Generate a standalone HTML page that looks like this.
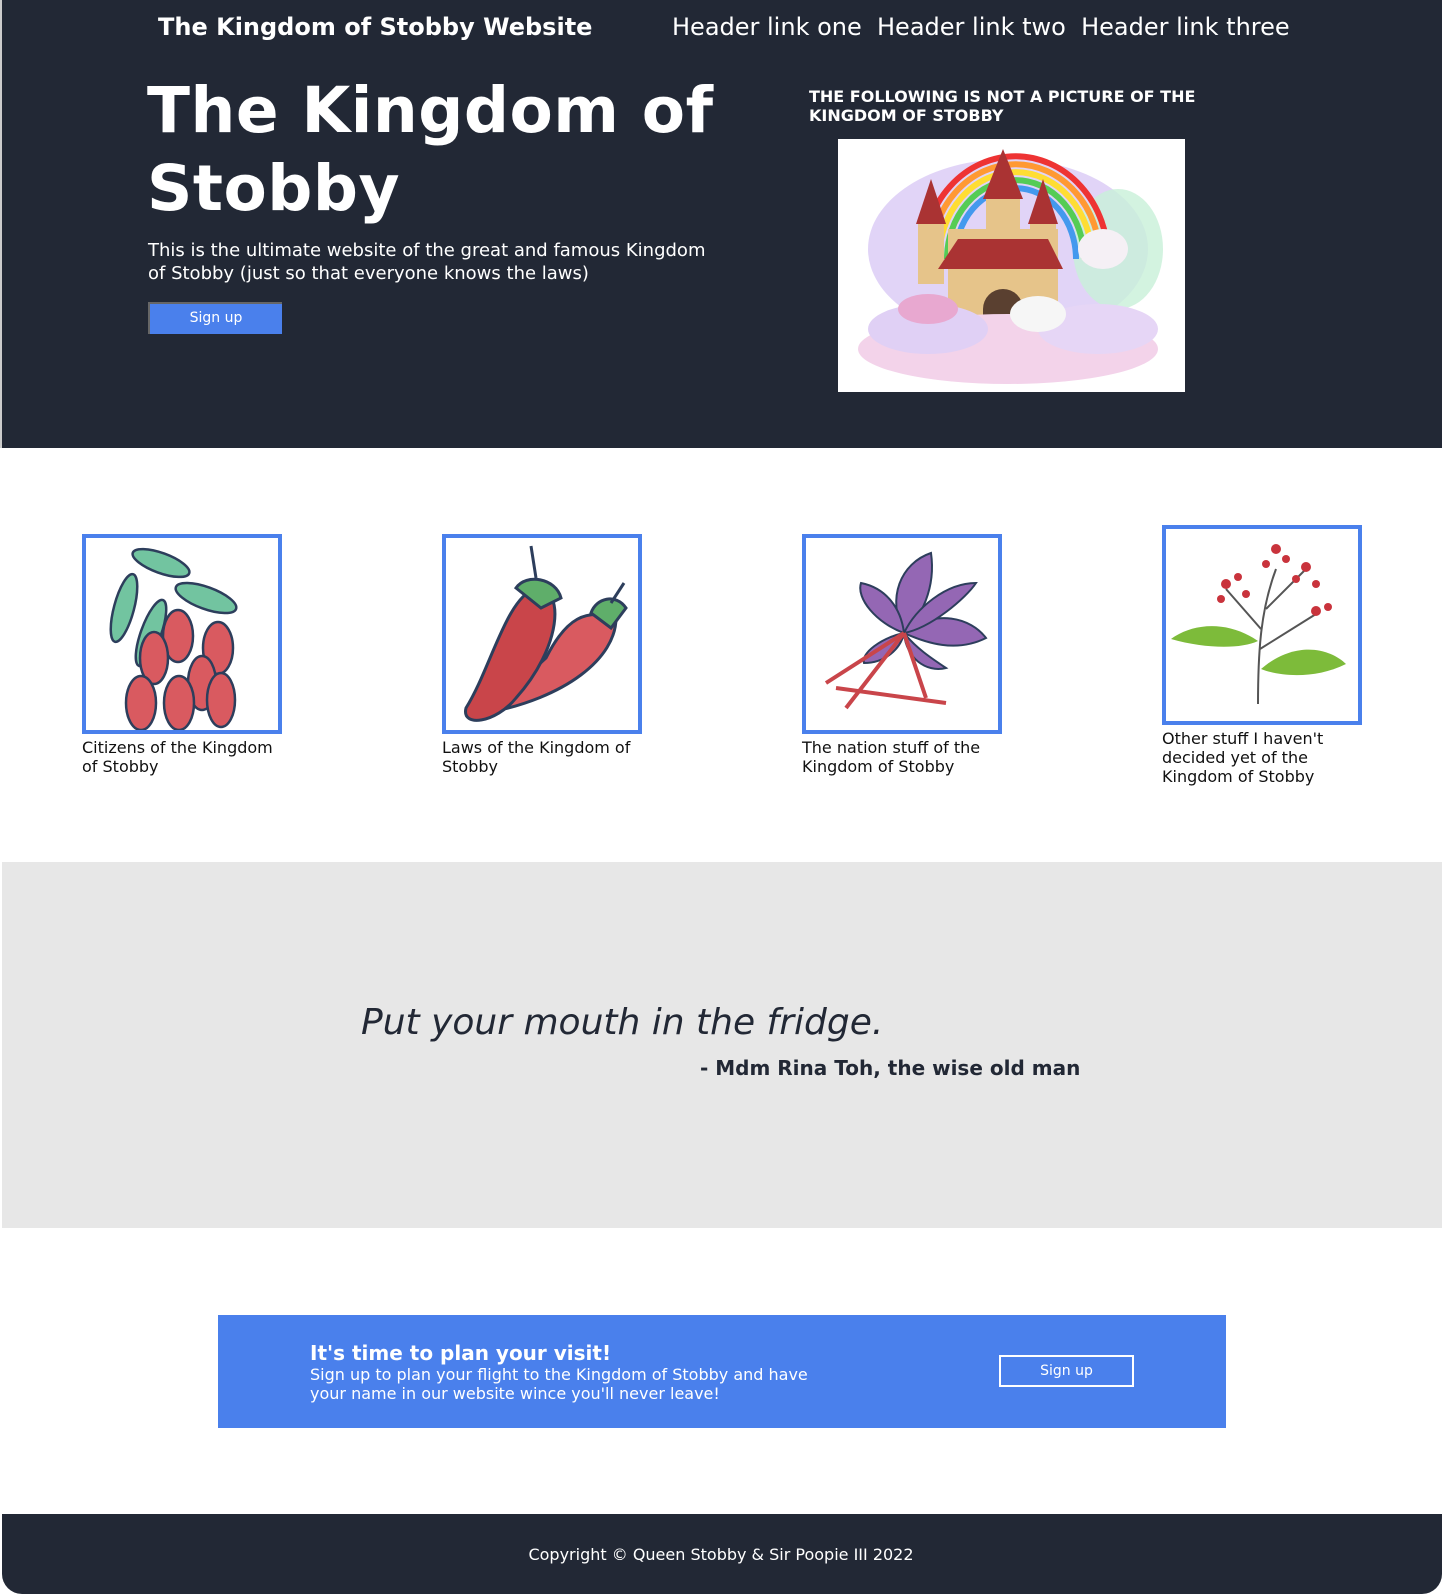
<!DOCTYPE html>
<html><head><meta charset="utf-8"><style>
*{margin:0;padding:0;box-sizing:border-box}
body{width:1442px;height:1594px;font-family:"DejaVu Sans","Liberation Sans",sans-serif;background:#fff;position:relative;overflow:hidden}
.hdr{position:absolute;left:0;top:0;width:1442px;height:448px;background:#222835;border-left:2px solid #ccc}
.abs{position:absolute}
.white{color:#fff}
.card{position:absolute;width:200px;height:200px;border:4px solid #4a80ec;background:#fff}
.cap{position:absolute;font-size:16px;line-height:19px;color:#111;width:210px}
</style></head><body>
<div class="hdr">
  <div class="abs white" style="left:156px;top:13px;font-size:24px;font-weight:bold">The Kingdom of Stobby Website</div>
  <div class="abs white" style="left:670px;top:13px;font-size:24px">Header link one&nbsp; Header link two&nbsp; Header link three</div>
  <div class="abs white" style="left:145px;top:72px;font-size:63px;font-weight:bold;line-height:78px;letter-spacing:0.5px">The Kingdom of<br>Stobby</div>
  <div class="abs white" style="left:146px;top:239px;font-size:18px;line-height:23px;width:580px">This is the ultimate website of the great and famous Kingdom of Stobby (just so that everyone knows the laws)</div>
  <div class="abs white" style="left:146px;top:302px;width:134px;height:32px;background:#4a80ec;border-top:2px solid #666;border-left:2px solid #666;font-size:14px;text-align:center;line-height:29px">Sign up</div>
  <div class="abs white" style="left:807px;top:87px;font-size:16px;font-weight:bold;line-height:19px;width:420px">THE FOLLOWING IS NOT A PICTURE OF THE KINGDOM OF STOBBY</div>
  <svg class="abs" style="left:836px;top:139px" width="347" height="253" viewBox="0 0 347 253">
    <rect width="347" height="253" fill="#fff"/>
    <ellipse cx="170" cy="110" rx="140" ry="90" fill="#d9c9f5" opacity=".8"/>
    <ellipse cx="280" cy="110" rx="45" ry="60" fill="#c8f0d8" opacity=".8"/>
    <path d="M85 120 A90 100 0 0 1 270 120" fill="none" stroke="#e33" stroke-width="6"/>
    <path d="M93 120 A82 92 0 0 1 262 120" fill="none" stroke="#f93" stroke-width="6"/>
    <path d="M101 120 A74 84 0 0 1 254 120" fill="none" stroke="#fd3" stroke-width="6"/>
    <path d="M109 120 A66 76 0 0 1 246 120" fill="none" stroke="#5c5" stroke-width="6"/>
    <path d="M117 120 A58 68 0 0 1 238 120" fill="none" stroke="#49e" stroke-width="6"/>
    <rect x="110" y="90" width="110" height="110" fill="#e6c48a"/>
    <polygon points="145,60 165,10 185,60" fill="#a33"/>
    <rect x="148" y="60" width="34" height="60" fill="#e6c48a"/>
    <polygon points="78,85 93,40 108,85" fill="#a33"/><rect x="80" y="85" width="26" height="60" fill="#e6c48a"/>
    <polygon points="190,85 205,40 220,85" fill="#a33"/><rect x="192" y="85" width="26" height="60" fill="#e6c48a"/>
    <polygon points="100,130 120,100 210,100 225,130" fill="#a33"/>
    <path d="M145 200 v-30 a20 20 0 0 1 40 0 v30z" fill="#5a4030"/>
    <ellipse cx="170" cy="210" rx="150" ry="35" fill="#f3d3ea"/>
    <ellipse cx="90" cy="190" rx="60" ry="25" fill="#e0d0f5"/>
    <ellipse cx="260" cy="190" rx="60" ry="25" fill="#e6d6f6"/>
    <ellipse cx="90" cy="170" rx="30" ry="15" fill="#e8a8d0"/>
    <ellipse cx="200" cy="175" rx="28" ry="18" fill="#f6f6f6"/>
    <ellipse cx="265" cy="110" rx="25" ry="20" fill="#f5f0f5"/>
  </svg>
</div>

<div class="card" style="left:82px;top:534px">
  <svg width="192" height="192" viewBox="0 0 192 192">
    <g stroke="#2d3e5c" stroke-width="2.5">
      <ellipse cx="75" cy="25" rx="30" ry="10" fill="#72c4a0" transform="rotate(20 75 25)"/>
      <ellipse cx="38" cy="70" rx="10" ry="35" fill="#72c4a0" transform="rotate(15 38 70)"/>
      <ellipse cx="65" cy="95" rx="10" ry="35" fill="#72c4a0" transform="rotate(20 65 95)"/>
      <ellipse cx="120" cy="60" rx="32" ry="11" fill="#72c4a0" transform="rotate(20 120 60)"/>
      <g fill="#d95a60">
        <ellipse cx="92" cy="98" rx="15" ry="26"/><ellipse cx="132" cy="110" rx="15" ry="26"/>
        <ellipse cx="68" cy="120" rx="14" ry="26"/><ellipse cx="116" cy="145" rx="14" ry="27"/>
        <ellipse cx="55" cy="165" rx="15" ry="27"/><ellipse cx="93" cy="165" rx="15" ry="27"/>
        <ellipse cx="135" cy="162" rx="14" ry="27"/>
      </g>
    </g>
  </svg>
</div>
<div class="cap" style="left:82px;top:738px">Citizens of the Kingdom of Stobby</div>

<div class="card" style="left:442px;top:534px">
  <svg width="192" height="192" viewBox="0 0 192 192">
    <g stroke="#2d3e5c" stroke-width="3">
      <path d="M100 120 C120 80 140 70 170 80 C170 120 120 160 40 175 Z" fill="#d95a60"/>
      <path d="M90 50 C120 50 115 110 70 160 C50 185 15 190 20 170 C45 130 60 60 90 50Z" fill="#c9454a"/>
      <path d="M70 50 C80 35 110 40 115 60 L95 70Z" fill="#5fae6a"/>
      <path d="M145 75 C150 60 170 55 180 70 L165 90Z" fill="#5fae6a"/>
      <path d="M90 40 L85 8" fill="none"/><path d="M165 65 L178 45" fill="none"/>
    </g>
  </svg>
</div>
<div class="cap" style="left:442px;top:738px">Laws of the Kingdom of Stobby</div>

<div class="card" style="left:802px;top:534px">
  <svg width="192" height="192" viewBox="0 0 192 192">
    <g stroke="#2d3e5c" stroke-width="2" fill="#9467b4">
      <path d="M98 95 C80 60 95 25 125 15 C130 50 115 80 98 95Z"/>
      <path d="M98 95 C70 85 50 60 55 45 C80 50 95 70 98 95Z"/>
      <path d="M98 95 C130 70 165 80 180 100 C150 115 120 105 98 95Z"/>
      <path d="M98 95 C125 90 160 60 170 45 C140 45 110 70 98 95Z"/>
      <path d="M98 95 C75 100 55 115 58 125 C80 125 95 110 98 95Z"/>
      <path d="M98 95 C110 110 125 120 140 130 C120 135 100 120 98 95Z"/>
      <path d="M98 95 L20 145 M98 95 L40 170 M98 95 L120 160 M30 150 L140 165" fill="none" stroke="#c9454a" stroke-width="4"/>
    </g>
  </svg>
</div>
<div class="cap" style="left:802px;top:738px">The nation stuff of the Kingdom of Stobby</div>

<div class="card" style="left:1162px;top:525px">
  <svg width="192" height="192" viewBox="0 0 192 192">
    <path d="M92 175 C92 120 95 80 110 40 M95 100 L60 60 M100 80 L140 40 M94 120 L150 85" stroke="#555" stroke-width="2" fill="none"/>
    <path d="M92 112 C60 90 25 95 5 110 C40 120 75 120 92 112Z" fill="#7dbb3a"/>
    <path d="M95 140 C130 110 165 120 180 135 C150 150 115 148 95 140Z" fill="#7dbb3a"/>
    <g fill="#c9333c">
      <circle cx="60" cy="55" r="5"/><circle cx="72" cy="48" r="4"/><circle cx="110" cy="20" r="5"/><circle cx="120" cy="30" r="4"/><circle cx="100" cy="35" r="4"/>
      <circle cx="140" cy="38" r="5"/><circle cx="150" cy="55" r="4"/><circle cx="130" cy="50" r="4"/><circle cx="150" cy="82" r="5"/><circle cx="162" cy="78" r="4"/><circle cx="55" cy="70" r="4"/><circle cx="80" cy="65" r="4"/>
    </g>
  </svg>
</div>
<div class="cap" style="left:1162px;top:729px">Other stuff I haven't decided yet of the Kingdom of Stobby</div>

<div class="abs" style="left:2px;top:862px;width:1440px;height:366px;background:#e7e7e7"></div>
<div class="abs" style="left:361px;top:1002px;font-size:36px;font-style:italic;color:#222835">Put your mouth in the fridge.</div>
<div class="abs" style="left:700px;top:1056px;font-size:20px;font-weight:bold;color:#222835">- Mdm Rina Toh, the wise old man</div>

<div class="abs" style="left:218px;top:1315px;width:1008px;height:113px;background:#4a80ec"></div>
<div class="abs white" style="left:310px;top:1341px;font-size:20px;font-weight:bold">It's time to plan your visit!</div>
<div class="abs white" style="left:310px;top:1365px;font-size:16px;line-height:19px;width:520px">Sign up to plan your flight to the Kingdom of Stobby and have your name in our website wince you'll never leave!</div>
<div class="abs white" style="left:999px;top:1355px;width:135px;height:32px;border:2px solid #fff;font-size:14px;text-align:center;line-height:28px">Sign up</div>

<div class="abs" style="left:2px;top:1514px;width:1440px;height:80px;background:#222835;border-radius:0 0 20px 20px"></div>
<div class="abs white" style="left:0;top:1545px;width:1442px;text-align:center;font-size:16px">Copyright © Queen Stobby &amp; Sir Poopie III 2022</div>
</body></html>
